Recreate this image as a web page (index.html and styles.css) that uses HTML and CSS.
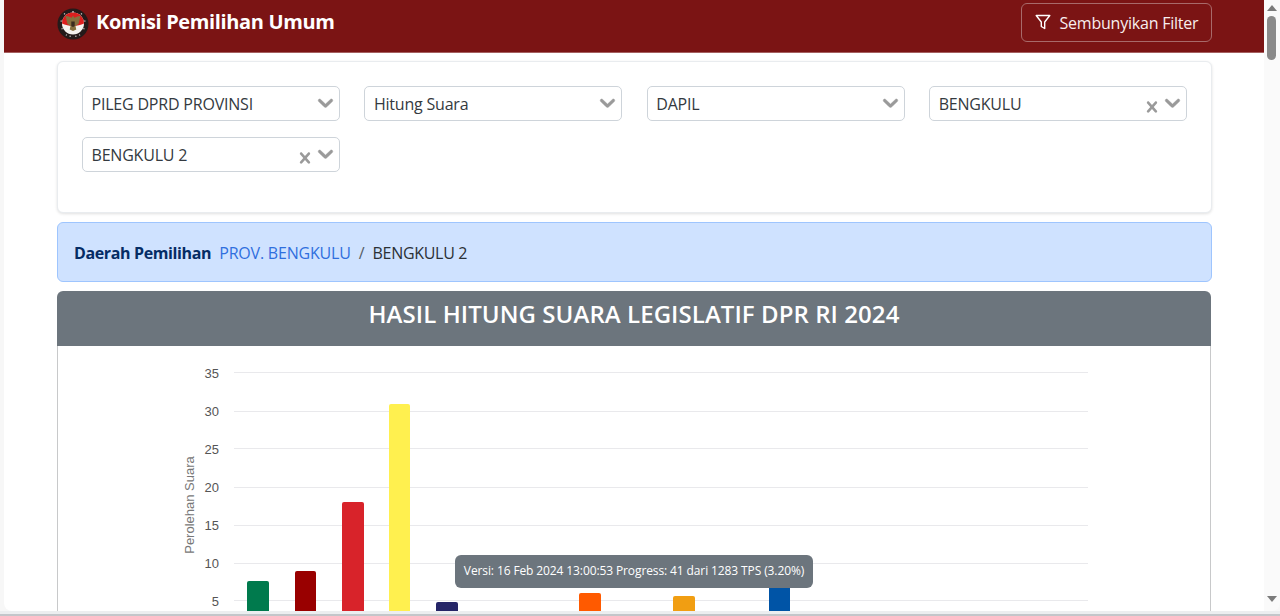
FILE: index.html
```html
<!DOCTYPE html>
<html lang="id">
<head>
<meta charset="utf-8">
<title>Komisi Pemilihan Umum</title>
<link rel="stylesheet" href="styles.css">
</head>
<body>
<div class="window">
  <div class="page">
    <nav class="navbar">
      <div class="brand">
        <svg class="logo" viewBox="0 0 32 32" aria-hidden="true">
          <circle cx="16" cy="16" r="15.500" fill="#241a1a"/>
          <circle cx="16" cy="4" r="1" fill="#bbb"/>
          <path d="M7 5.500l1 .8M25 5.500l-1 .8M3.500 13l1.300.2M28.500 13l-1.300.2M4.500 21l1.200-.5M27.500 21l-1.200-.5M9 27.500l.8-1M23 27.500l-.8-1M13 28.800l.3-1.200M19 28.800l-.3-1.200" stroke="#ccc" stroke-width="1.200"/>
          <circle cx="16" cy="15.500" r="11" fill="#f6f3f0"/>
          <path d="M5 15.500a11 11 0 0 1 22 0c-3 1.500-7 2.500-11 2.500s-8-1-11-2.500z" fill="#dc1f1f"/>
          <path d="M16 7.500l1.300 2.200 3.700-1.500 2.500-.2-1 4-1 4-3 2 .8 3.500-3.300 1.500-3.300-1.500.8-3.500-3-2-1-4-1-4 2.500.2 3.700 1.500z" fill="#86703f"/>
          <path d="M14.300 13.500h3.400v4.500l-1.700 1-1.700-1z" fill="#3a2c20"/>
        </svg>
        <span class="brand-name">Komisi Pemilihan Umum</span>
      </div>
      <button class="filter-btn" type="button">
        <svg class="funnel" viewBox="0 0 16 16" aria-hidden="true"><path d="M1.200 1.500h13.600L9.700 8v6.500l-3.400-2V8z" fill="none" stroke="currentColor" stroke-width="1.400" stroke-linejoin="round"/></svg>
        <span>Sembunyikan Filter</span>
      </button>
    </nav>
    <main class="container">
      <section class="filter-card">
        <div class="select"><span class="value">PILEG DPRD PROVINSI</span><svg class="chev" viewBox="0 0 20 20"><path d="M4.516 7.548c.436-.446 1.043-.481 1.576 0l3.908 3.747 3.908-3.747c.533-.481 1.141-.446 1.574 0 .436.445.408 1.197 0 1.615-.406.418-4.695 4.502-4.695 4.502-.217.223-.502.335-.787.335s-.57-.112-.789-.335c0 0-4.287-4.084-4.695-4.502s-.436-1.170 0-1.615z"/></svg></div>
        <div class="select"><span class="value">Hitung Suara</span><svg class="chev" viewBox="0 0 20 20"><path d="M4.516 7.548c.436-.446 1.043-.481 1.576 0l3.908 3.747 3.908-3.747c.533-.481 1.141-.446 1.574 0 .436.445.408 1.197 0 1.615-.406.418-4.695 4.502-4.695 4.502-.217.223-.502.335-.787.335s-.57-.112-.789-.335c0 0-4.287-4.084-4.695-4.502s-.436-1.170 0-1.615z"/></svg></div>
        <div class="select"><span class="value">DAPIL</span><svg class="chev" viewBox="0 0 20 20"><path d="M4.516 7.548c.436-.446 1.043-.481 1.576 0l3.908 3.747 3.908-3.747c.533-.481 1.141-.446 1.574 0 .436.445.408 1.197 0 1.615-.406.418-4.695 4.502-4.695 4.502-.217.223-.502.335-.787.335s-.57-.112-.789-.335c0 0-4.287-4.084-4.695-4.502s-.436-1.170 0-1.615z"/></svg></div>
        <div class="select"><span class="value">BENGKULU</span><svg class="clear" viewBox="0 0 20 20"><path d="M14.348 14.849c-.469.469-1.229.469-1.697 0l-2.651-3.030-2.651 3.029c-.469.469-1.229.469-1.697 0-.469-.469-.469-1.229 0-1.697l2.758-3.150-2.759-3.152c-.469-.469-.469-1.228 0-1.697s1.228-.469 1.697 0l2.652 3.031 2.651-3.031c.469-.469 1.228-.469 1.697 0s.469 1.229 0 1.697l-2.758 3.152 2.758 3.150c.469.469.469 1.229 0 1.698z"/></svg><svg class="chev" viewBox="0 0 20 20"><path d="M4.516 7.548c.436-.446 1.043-.481 1.576 0l3.908 3.747 3.908-3.747c.533-.481 1.141-.446 1.574 0 .436.445.408 1.197 0 1.615-.406.418-4.695 4.502-4.695 4.502-.217.223-.502.335-.787.335s-.57-.112-.789-.335c0 0-4.287-4.084-4.695-4.502s-.436-1.170 0-1.615z"/></svg></div>
        <div class="select"><span class="value">BENGKULU 2</span><svg class="clear" viewBox="0 0 20 20"><path d="M14.348 14.849c-.469.469-1.229.469-1.697 0l-2.651-3.030-2.651 3.029c-.469.469-1.229.469-1.697 0-.469-.469-.469-1.229 0-1.697l2.758-3.150-2.759-3.152c-.469-.469-.469-1.228 0-1.697s1.228-.469 1.697 0l2.652 3.031 2.651-3.031c.469-.469 1.228-.469 1.697 0s.469 1.229 0 1.697l-2.758 3.152 2.758 3.150c.469.469.469 1.229 0 1.698z"/></svg><svg class="chev" viewBox="0 0 20 20"><path d="M4.516 7.548c.436-.446 1.043-.481 1.576 0l3.908 3.747 3.908-3.747c.533-.481 1.141-.446 1.574 0 .436.445.408 1.197 0 1.615-.406.418-4.695 4.502-4.695 4.502-.217.223-.502.335-.787.335s-.57-.112-.789-.335c0 0-4.287-4.084-4.695-4.502s-.436-1.170 0-1.615z"/></svg></div>
      </section>
      <section class="alert">
        <strong class="alert-title">Daerah Pemilihan</strong>
        <a class="crumb-link" href="#">PROV. BENGKULU</a>
        <span class="crumb-sep">/</span>
        <span class="crumb-current">BENGKULU 2</span>
      </section>
      <section class="chart-card">
        <h1 class="chart-title">HASIL HITUNG SUARA LEGISLATIF DPR RI 2024</h1>
        <div class="chart-body">
          <svg class="chart" width="1153" height="300" viewBox="0 0 1153 300">
            <g class="grid">
              <line x1="176" x2="1030" y1="26.500" y2="26.500"/>
              <line x1="176" x2="1030" y1="65.500" y2="65.500"/>
              <line x1="176" x2="1030" y1="102.500" y2="102.500"/>
              <line x1="176" x2="1030" y1="141.500" y2="141.500"/>
              <line x1="176" x2="1030" y1="179.500" y2="179.500"/>
              <line x1="176" x2="1030" y1="217.500" y2="217.500"/>
              <line x1="176" x2="1030" y1="254.500" y2="254.500"/>
            </g>
            <g class="ticks">
              <text x="161" y="32">35</text>
              <text x="161" y="70">30</text>
              <text x="161" y="108">25</text>
              <text x="161" y="146">20</text>
              <text x="161" y="184">15</text>
              <text x="161" y="222">10</text>
              <text x="161" y="260">5</text>
            </g>
            <text class="axis-label" transform="translate(136 159) rotate(-90)">Perolehan Suara</text>
            <rect x="189" y="235" width="22" height="60" rx="2" fill="#007a4d"/>
            <rect x="237" y="225" width="21" height="70" rx="2" fill="#990000"/>
            <rect x="284" y="156" width="22" height="140" rx="2" fill="#d8232a"/>
            <rect x="331" y="58" width="21" height="240" rx="2" fill="#fff04f"/>
            <rect x="378" y="256" width="22" height="40" rx="2" fill="#252567"/>
            <rect x="521" y="247" width="22" height="50" rx="2" fill="#ff5a00"/>
            <rect x="615" y="250" width="22" height="50" rx="2" fill="#f19e12"/>
            <rect x="711" y="236" width="21" height="60" rx="2" fill="#0054a6"/>
          </svg>
          <div class="tooltip">Versi: 16 Feb 2024 13:00:53 Progress: 41 dari 1283 TPS (3.20%)</div>
        </div>
      </section>
    </main>
  </div>
  <div class="scrollbar">
    <svg class="arrow" viewBox="0 0 16 16"><path d="M8 5l5 6H3z"/></svg>
    <div class="thumb"></div>
    <div class="track"></div>
    <svg class="arrow" viewBox="0 0 16 16"><path d="M8 11l5-6H3z"/></svg>
  </div>
</div>
<div class="window-edge"></div>
</body>
</html>
```
FILE: styles.css
```css
* { box-sizing: border-box; }
html, body { margin: 0; height: 100%; overflow: hidden; background: #eceef0; }
body { font-family: "Open Sans", "Noto Sans", sans-serif; color: #212529; }
.window { display: flex; height: 611px; background: #f7f7f7; padding-left: 4px; }
.page { flex: 1; min-width: 0; overflow: hidden; background: #fff; border-radius: 0 0 0 8px; }
.navbar { height: 53px; background: #7b1414; border-bottom: 1px solid #a56060; padding: 3px 52px 0 53px; display: flex; justify-content: space-between; align-items: flex-start; }
.brand { display: flex; align-items: flex-start; gap: 7px; }
.logo { width: 32px; height: 32px; display: block; margin-top: 5px; }
.brand-name { color: #fff; font-size: 20px; font-weight: 700; line-height: 30px; margin-top: 4px; letter-spacing: -.36px; }
.filter-btn { width: 191px; height: 39px; background: transparent; border: 1px solid #a86a6a; border-radius: 6px; color: #f8eeee; display: flex; align-items: center; justify-content: center; gap: 9px; font: 400 16px "Open Sans", "Noto Sans", sans-serif; letter-spacing: -.22px; padding: 0; }
.funnel { width: 16px; height: 16px; margin-top: -2px; color: #fff; }
.container { padding: 8px 52px 0 53px; display: flex; flex-direction: column; gap: 9px; }
.filter-card { height: 152px; border: 1px solid #e9ecef; border-radius: 6px; box-shadow: 0 1px 3px rgba(0,0,0,.12); padding: 24px 24px 0; display: grid; grid-template-columns: repeat(4, 1fr); column-gap: 24.500px; row-gap: 16px; align-content: start; background: #fff; }
.select { height: 35px; border: 1px solid #ced4da; border-radius: 5px; display: flex; align-items: center; padding: 0 1px 0 8.500px; font-size: 16px; letter-spacing: -.2px; color: #343a40; }
.value { flex: 1; white-space: nowrap; }
.chev { width: 25px; height: 25px; fill: #9a9a9a; stroke: #9a9a9a; stroke-width: .4; margin-bottom: 3px; flex: none; }
.clear { width: 22px; height: 22px; fill: #9a9a9a; margin: 7px -3px 0 0; flex: none; }
.alert { height: 60px; background: #cfe2ff; border: 1px solid #9ec5fe; border-radius: 6px; padding: 2px 16px 0; display: flex; align-items: center; gap: 8px; font-size: 16px; }
.alert-title { color: #052c65; font-weight: 700; letter-spacing: -.37px; }
.crumb-link { color: #2f6fde; text-decoration: none; letter-spacing: -.2px; }
.crumb-sep { color: #555d66; }
.crumb-current { color: #2b3035; letter-spacing: -.3px; }
.chart-card { height: 330px; overflow: hidden; border-radius: 6px 6px 0 0; margin-right: 1px; }
.chart-title { margin: 0; height: 55px; background: #6c757d; color: #fff; font-size: 24px; font-weight: 600; letter-spacing: .07px; line-height: 46px; text-align: center; }
.chart-body { position: relative; height: 275px; border: solid #c8c9ca; border-width: 0 1px; }
.chart { display: block; position: absolute; left: 0; top: 0; font-family: "Liberation Sans", Arial, sans-serif; }
.grid line { stroke: #e9e9ec; stroke-width: 1; }
.ticks text { font-size: 13px; fill: #555; text-anchor: end; }
.axis-label { font-size: 13px; fill: #777; text-anchor: middle; }
.tooltip { position: absolute; left: 397px; top: 209px; width: 358px; height: 33px; background: #6c757d; border-radius: 6px; color: #fff; font-size: 12px; letter-spacing: -.11px; line-height: 32px; text-align: center; white-space: nowrap; }
.scrollbar { width: 16px; background: #fafafa; display: flex; flex-direction: column; padding-bottom: 4px; border-radius: 0 0 8px 0; }
.arrow { width: 16px; height: 16px; fill: #7b7b7b; flex: none; }
.thumb { width: 9px; height: 44px; margin-left: 3px; background: #8a8a8a; border-radius: 5px; flex: none; }
.track { flex: 1; }
.window-edge { height: 5px; background: #eceef0; border-bottom: 2px solid #c3c6ca; }
```
